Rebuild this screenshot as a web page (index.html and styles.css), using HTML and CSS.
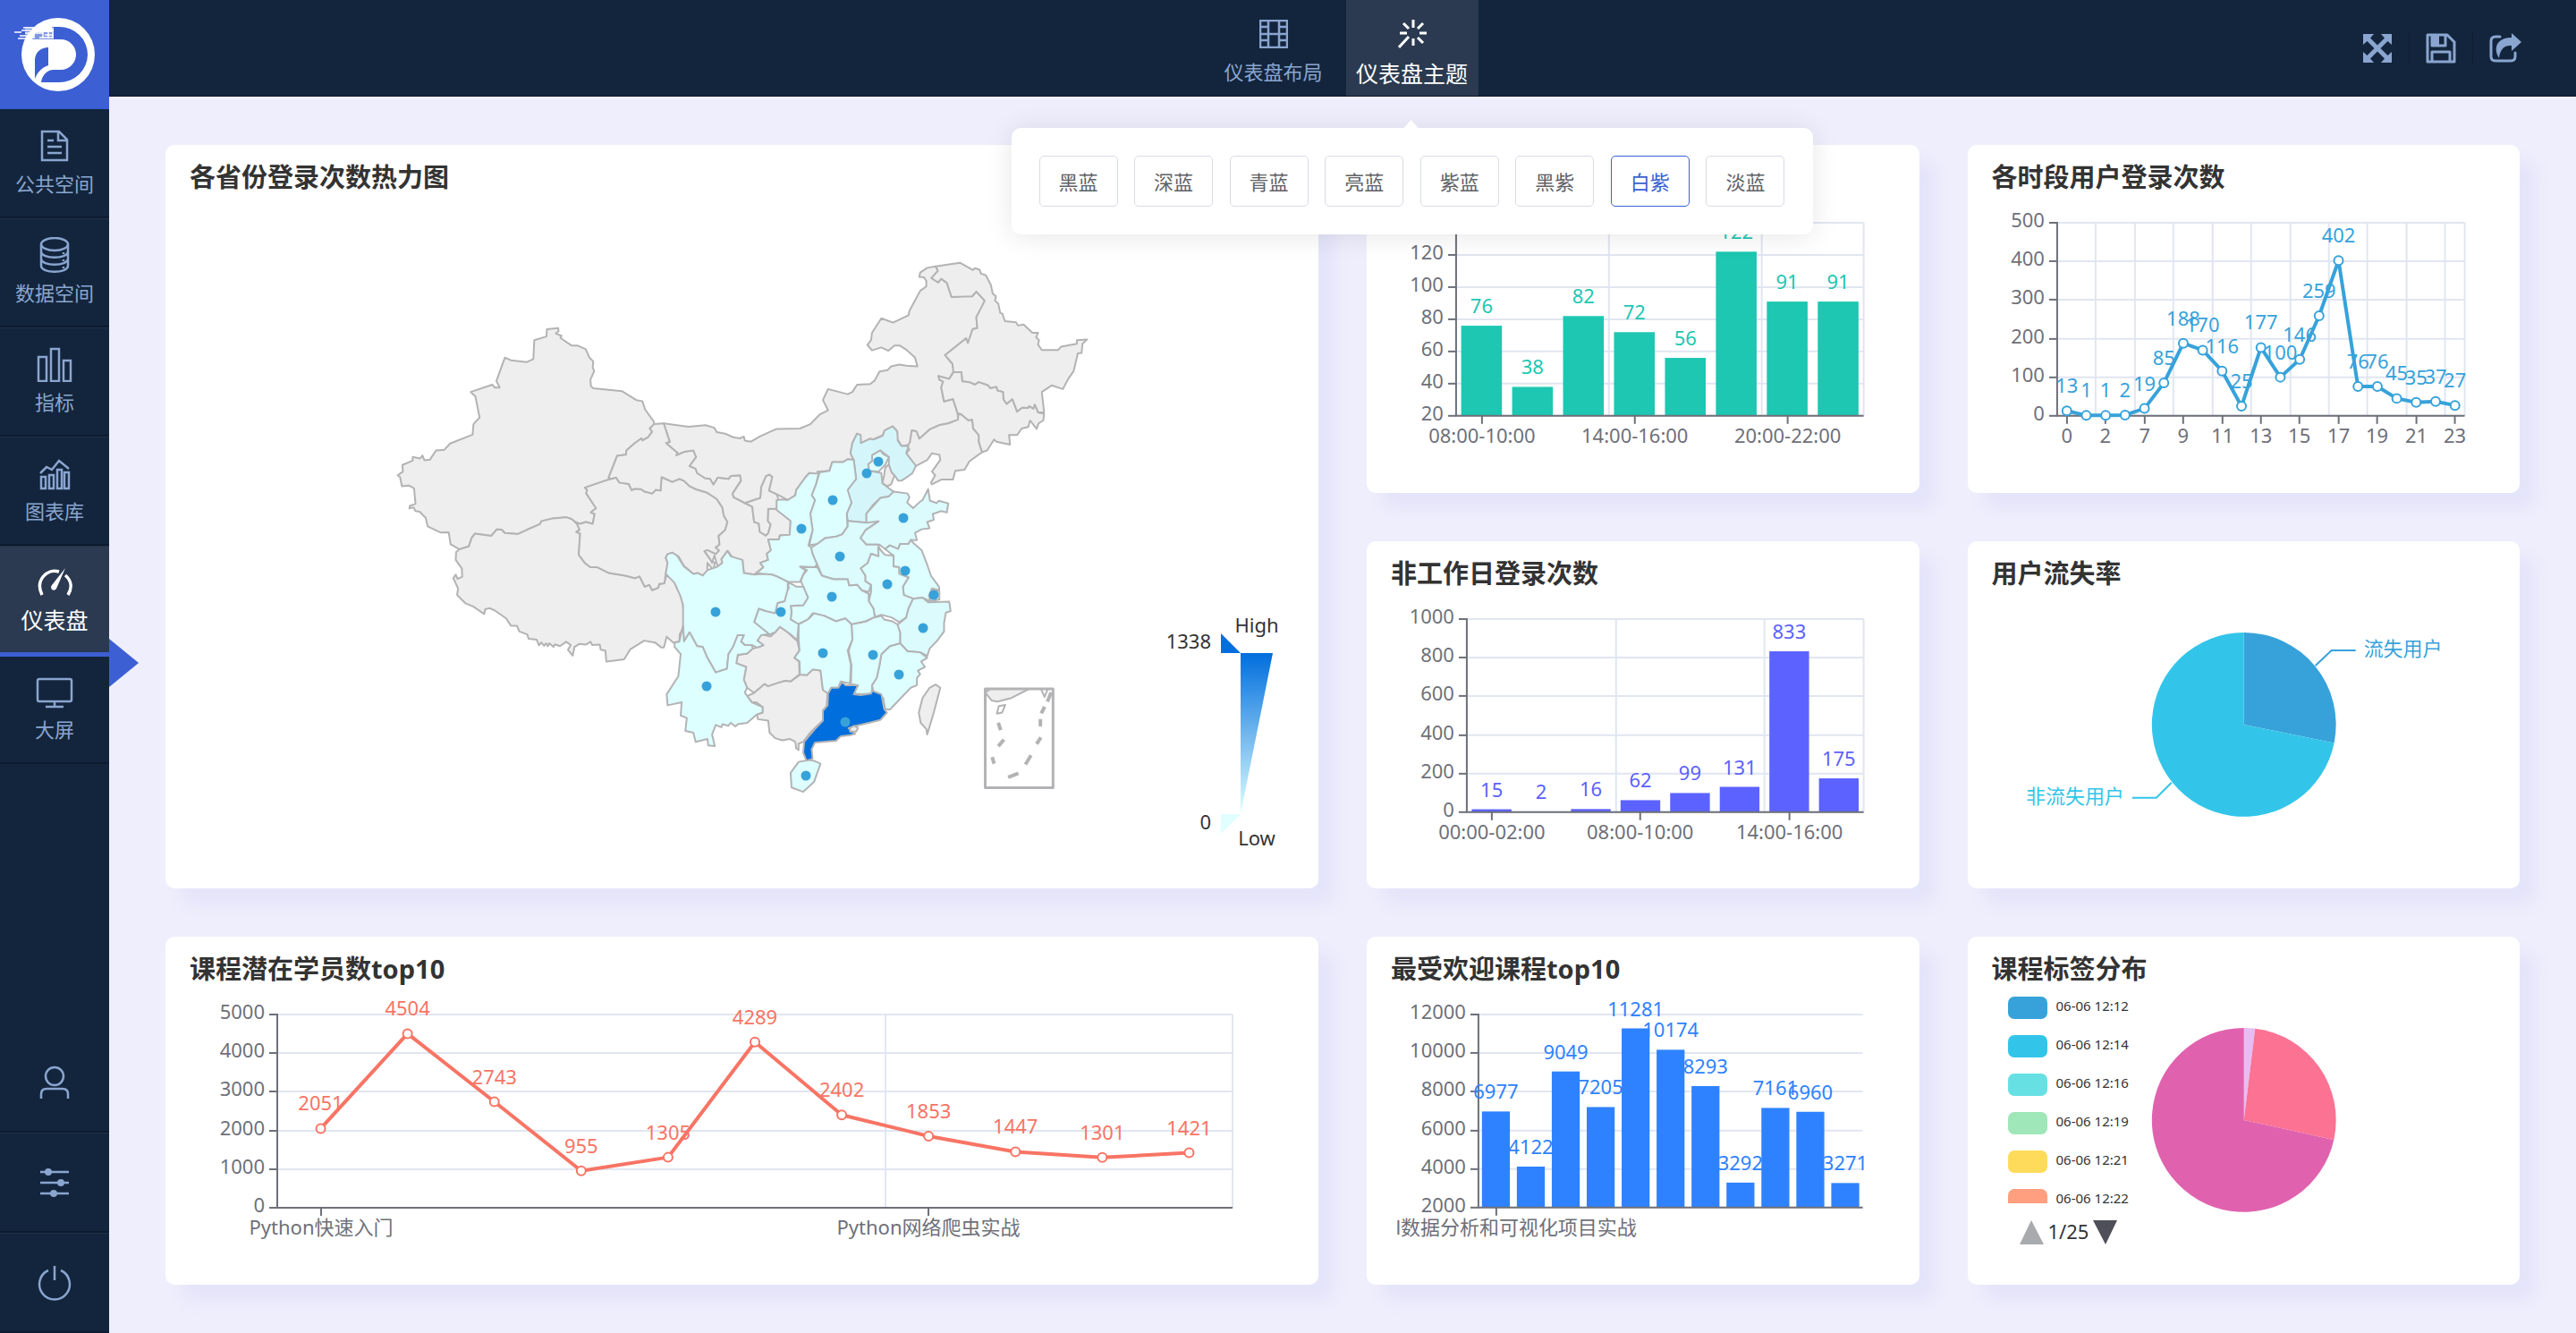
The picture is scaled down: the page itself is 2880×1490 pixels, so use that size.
FILE: index.html
```html
<!DOCTYPE html>
<html lang="zh-CN">
<head>
<meta charset="utf-8">
<title>仪表盘</title>
<link rel="stylesheet" href="styles.css">
</head>
<body>
<div class="app">
  <aside class="sidebar">
    <a class="logo" href="#" aria-label="首页">
      <svg viewBox="0 0 122 122">
        <circle cx="65" cy="61" r="41" fill="#fff"/>
        <path fill="#3c5fd3" d="M58 30H66A32 31 0 0 1 66 92H46C47 84 53 78 60 78H68A17 17 0 0 0 68 44H36L40 36H58Z"/>
        <path fill="#3c5fd3" d="M54 53V73C48 75 42 80 39 88V66C40 58 46 53 54 53Z"/>
        <path fill="#fff" d="M28 30h32v14h-32z" opacity=".35"/>
        <path stroke="#fff" stroke-width="1.5" fill="none" d="M16 36H24M26 31H38M24 34H34M28 37H40M20 43H32M22 40H36M38 30V43M36 33H46M40 37H48M48 30V43M46 34H60M50 39H60M44 42H60M54 30V43M59 31V43"/>
      </svg>
    </a>
    <nav class="menu">
      <a class="menu-item" href="#">
        <svg class="icon" viewBox="0 0 42 40"><path d="M7 4H26L35 13V36H7ZM25 4V14H35M13 14H20M13 21H29M13 28H29"/></svg>
        <span>公共空间</span>
      </a>
      <a class="menu-item" href="#">
        <svg class="icon" viewBox="0 0 42 40"><ellipse cx="21" cy="8" rx="15" ry="7"/><path d="M6 8V32C6 41 36 41 36 32V8M6 16C6 25 36 25 36 16M6 24C6 33 36 33 36 24"/><path d="M31 17v2M31 25v2M31 33v2"/></svg>
        <span>数据空间</span>
      </a>
      <a class="menu-item" href="#">
        <svg class="icon" viewBox="0 0 42 40"><path d="M3 12H12V39H3ZM17 3H26V39H17ZM31 16H39V39H31Z"/></svg>
        <span>指标</span>
      </a>
      <a class="menu-item" href="#">
        <svg class="icon" viewBox="0 0 42 40"><path d="M6 24H11V37H6ZM15 22H20V37H15ZM24 16H29V37H24ZM32 19H37V37H32ZM5 20L12 13 18 16 26 6 37 15"/></svg>
        <span>图表库</span>
      </a>
      <a class="menu-item is-active" href="#" aria-current="page">
        <svg class="icon" viewBox="0 0 42 40"><path class="thick" d="M7 34C-1 18 12 4 26 8M33 12C40 18 41 26 36 34"/><path class="solid" d="M33 4L23 27C20 31 15 27 18 23Z"/></svg>
        <span>仪表盘</span>
      </a>
      <a class="menu-item" href="#">
        <svg class="icon" viewBox="0 0 42 40"><rect x="2" y="6" width="38" height="25" rx="2"/><path d="M21 31V36M11 37H31"/></svg>
        <span>大屏</span>
      </a>
    </nav>
    <nav class="menu-bottom">
      <a class="menu-tool" href="#" aria-label="用户"><svg class="icon" viewBox="0 0 42 40"><circle cx="21" cy="13" r="10"/><path d="M6 38V33Q6 27 12 27H30Q36 27 36 33V38"/></svg></a>
      <a class="menu-tool" href="#" aria-label="设置"><svg class="icon" viewBox="0 0 42 40"><path d="M5 8H37M5 20H37M5 32H37"/><circle class="solid" cx="14" cy="8" r="4"/><circle class="solid" cx="28" cy="20" r="4"/><circle class="solid" cx="20" cy="32" r="4"/></svg></a>
      <a class="menu-tool" href="#" aria-label="退出"><svg class="icon" viewBox="0 0 42 40"><path d="M14 6A17 17 0 1 0 28 6M21 1V17"/></svg></a>
    </nav>
    <span class="sidebar-arrow"></span>
  </aside>

  <header class="topbar">
    <nav class="tabs">
      <button class="tab" type="button">
        <svg class="icon" viewBox="0 0 32 32"><path d="M1 1H31V31H1ZM10 1V31M22 1V31M10 16H22M1 8H10M1 16H10M1 23H10M22 8H31M22 16H31M22 23H31"/></svg>
        <span>仪表盘布局</span>
      </button>
      <div class="tab-wrap">
        <button class="tab is-active" type="button" aria-expanded="true">
          <svg class="icon" viewBox="0 0 32 32"><path d="M17 0V9M17 21V29M2 15H10M24 15H32M6 4L12 10M28 4L22 10M28 26L22 20M12 19L1 31"/></svg>
          <span>仪表盘主题</span>
        </button>
        <div class="themes">
          <button class="theme" type="button">黑蓝</button>
          <button class="theme" type="button">深蓝</button>
          <button class="theme" type="button">青蓝</button>
          <button class="theme" type="button">亮蓝</button>
          <button class="theme" type="button">紫蓝</button>
          <button class="theme" type="button">黑紫</button>
          <button class="theme is-selected" type="button" aria-pressed="true">白紫</button>
          <button class="theme" type="button">淡蓝</button>
        </div>
      </div>
    </nav>
    <div class="tools">
      <button class="tool" type="button" aria-label="全屏"><svg viewBox="0 0 36 36"><path fill="currentColor" d="M2 2H14L10 6.500 18 14.500 26 6.500 22 2H34V14L29.500 10 21.500 18 29.500 26 34 22V34H22L26 29.500 18 21.500 10 29.500 14 34H2V22L6.500 26 14.500 18 6.500 10 2 14Z"/></svg></button>
      <button class="tool" type="button" aria-label="保存"><svg viewBox="0 0 36 36"><path fill="none" stroke="currentColor" stroke-width="3" stroke-linejoin="round" d="M3 3H25L33 11V33H3ZM8 3V15H23V3M8 33V22H28V33"/><path fill="currentColor" d="M8 3H16V15H8Z"/></svg></button>
      <button class="tool" type="button" aria-label="分享"><svg viewBox="0 0 36 36"><path fill="none" stroke="currentColor" stroke-width="3" stroke-linecap="round" d="M12 5H7Q2 5 2 10V27Q2 32 7 32H24Q29 32 29 27V23"/><path fill="currentColor" d="M25 1L36 11 25 21V15C16 14 12 20 11 29C4 18 8 6 25 6Z"/></svg></button>
    </div>
  </header>

  <main class="board">
    <section class="card card-map">
      <h2>各省份登录次数热力图</h2>
      <svg class="chart" viewBox="0 0 1289 775" preserveAspectRatio="xMinYMin meet">
        <defs>
          <linearGradient id="heat" x1="0" y1="0" x2="0" y2="1"><stop offset="0" stop-color="#006edd"/><stop offset="1" stop-color="#e0ffff"/></linearGradient>
        </defs>
        <g class="map" transform="translate(245 52) scale(.52296 .40816)">
          <path d="M347,240 L371,237 372,245 366,252 378,258 376,264 400,285 413,285 430,295 438,318 446,328 445,345 448,355 440,378 441,396 446,402 508,410 538,434 551,437 557,460 575,492 576,500 567,512 572,521 563,536 551,545 549,539 535,552 517,572 516,584 497,587 487,620 479,646 484,650 471,655 428,674 433,680 431,690 438,703 452,730 441,742 449,746 445,773 430,768 418,773 408,768 400,760 388,755 360,758 335,766 332,774 305,789 285,801 257,798 250,789 240,788 228,806 193,800 186,812 180,835 160,843 141,829 137,796 120,797 92,780 88,757 75,740 66,738 62,728 53,731 54,724 66,718 63,676 52,668 37,670 33,645 28,640 39,630 38,612 60,600 60,590 76,594 81,586 85,599 97,597 110,572 128,570 140,553 188,529 190,500 203,482 194,424 184,412 230,392 236,400 246,400 239,382 257,318 270,325 304,330 318,322 320,270 346,260Z"/>
          <path d="M160,843 L180,835 186,812 193,800 228,806 240,788 250,789 257,798 285,801 305,789 332,774 335,766 360,758 388,755 400,760 412,774 417,790 410,795 418,800 415,858 428,880 440,892 455,892 480,908 515,915 535,922 545,917 556,945 566,940 572,955 585,948 587,938 598,936 602,915 618,925 625,950 635,970 638,995 641,1052 631,1075 630,1096 617,1098 603,1082 597,1112 592,1112 578,1098 555,1093 525,1117 512,1144 474,1150 472,1120 462,1118 460,1104 444,1105 440,1096 430,1104 416,1102 406,1110 402,1134 392,1118 398,1105 388,1096 375,1108 364,1103 361,1110 352,1100 349,1108 345,1100 341,1107 335,1098 330,1106 325,1090 308,1088 305,1076 288,1068 283,1052 270,1052 260,1032 235,1010 225,1004 215,1007 213,1020 190,1000 172,990 155,968 157,950 147,922 152,912 156,924 166,918 165,895 152,872 153,850Z"/>
          <path d="M428,674 L471,655 495,646 502,660 522,664 528,681 534,677 548,678 556,685 572,690 580,680 590,682 592,645 615,658 630,650 640,655 652,670 665,678 690,688 710,705 722,728 725,750 733,768 728,790 714,806 716,830 708,838 715,846 708,856 690,845 684,848 697,872 706,880 703,900 690,880 690,902 680,915 670,908 660,910 640,888 628,862 615,852 605,856 601,866 605,880 601,910 598,936 587,938 585,948 572,955 566,940 556,945 545,917 535,922 515,915 480,908 455,892 440,892 428,880 415,858 418,800 410,795 417,790 410,770 418,773 430,768 445,773 449,746 441,742 452,730 438,703 431,690 433,680Z"/>
          <path d="M576,500 L597,498 610,549 602,552 626,578 624,585 640,576 660,572 666,590 652,615 665,622 668,634 685,648 696,650 703,665 712,646 735,650 740,642 760,640 762,655 744,690 746,700 770,716 786,726 790,768 800,772 802,795 815,805 820,798 825,775 819,765 820,732 838,732 868,765 866,803 845,805 843,816 820,816 826,845 817,855 820,872 803,880 810,892 790,912 768,908 765,872 745,867 733,847 720,870 722,880 712,890 705,860 700,880 697,872 684,848 690,845 708,856 715,846 708,838 716,830 714,806 728,790 733,768 725,750 722,728 710,705 690,688 665,678 652,670 640,655 630,650 615,658 592,645 590,682 580,680 572,690 556,685 548,678 534,677 528,681 522,664 502,660 495,646 484,650 479,646 487,620 497,587 516,584 517,572 535,552 549,539 551,545 563,536 572,521 567,512Z"/>
          <path d="M770,716 L803,702 805,672 815,643 822,638 829,644 822,682 838,692 842,705 838,732 820,732 819,765 825,775 820,798 815,805 802,795 800,772 790,768 786,726Z"/>
          <path d="M597,498 L650,507 686,503 705,510 710,522 728,526 745,536 760,539 768,534 770,545 783,548 803,533 838,513 888,512 910,500 930,474 948,462 937,434 948,404 990,418 1000,412 1010,392 1038,390 1048,380 1058,356 1075,352 1083,342 1100,337 1115,340 1139,342 1134,318 1115,296 1102,285 1090,285 1077,299 1062,290 1042,298 1032,283 1040,270 1042,250 1062,210 1087,222 1120,202 1122,190 1145,135 1158,123 1158,108 1153,98 1143,97 1145,85 1160,72 1178,68 1183,80 1169,100 1182,103 1183,112 1190,102 1202,113 1212,152 1240,148 1256,150 1265,137 1283,162 1275,185 1265,207 1267,237 1257,240 1250,270 1247,278 1243,265 1198,311 1214,335 1225,330 1224,342 1214,340 1218,352 1207,376 1192,372 1184,368 1186,378 1194,383 1190,400 1196,438 1215,431 1225,470 1226,488 1205,498 1185,503 1165,515 1143,540 1137,520 1127,517 1123,557 1105,560 1096,540 1096,520 1086,506 1069,517 1065,530 1045,542 1038,540 1018,552 1017,530 1010,526 1000,552 996,580 1003,598 990,596 980,604 957,604 951,628 925,630 928,640 908,634 900,645 880,680 878,695 862,708 838,692 822,682 829,644 822,638 815,643 805,672 803,702 770,716 746,700 744,690 762,655 760,640 740,642 735,650 712,646 703,665 696,650 685,648 668,634 665,622 652,615 666,590 660,572 640,576 624,585 626,578 602,552 610,549Z"/>
          <path d="M1178,68 L1230,58 1258,78 1262,73 1272,77 1275,88 1285,92 1296,118 1300,142 1307,150 1305,162 1312,170 1316,195 1321,198 1326,218 1350,221 1354,230 1366,227 1385,250 1397,250 1393,262 1399,270 1397,282 1405,297 1440,297 1446,288 1480,280 1480,270 1502,268 1492,280 1490,305 1482,306 1473,355 1462,375 1450,404 1426,394 1405,412 1410,468 1397,468 1390,447 1387,458 1378,451 1376,456 1363,455 1352,466 1342,432 1330,445 1323,433 1322,412 1310,408 1308,398 1295,402 1290,394 1270,385 1262,392 1250,385 1235,383 1233,358 1216,358 1214,335 1198,311 1243,265 1247,278 1257,240 1267,237 1265,207 1283,162 1265,137 1256,150 1212,152 1202,113 1190,102 1183,112 1169,100 1183,80Z"/>
          <path d="M1216,358 L1233,358 1235,383 1250,385 1262,392 1270,385 1290,394 1295,402 1308,398 1310,408 1322,412 1323,433 1330,445 1342,432 1352,466 1363,455 1376,456 1378,451 1387,458 1390,447 1397,468 1410,472 1408,490 1398,498 1394,513 1380,490 1376,508 1362,512 1352,530 1335,530 1337,556 1308,548 1303,542 1288,572 1277,577 1270,548 1270,530 1258,512 1256,488 1248,490 1232,473 1225,470 1215,431 1196,438 1190,400 1194,383 1186,378 1184,368 1207,376Z"/>
          <path d="M1226,475 L1232,473 1248,490 1256,488 1258,512 1270,530 1270,548 1277,577 1250,602 1240,625 1220,628 1215,652 1190,652 1170,665 1168,660 1177,640 1170,630 1188,598 1186,584 1170,580 1160,598 1135,615 1115,580 1122,570 1117,560 1123,550 1127,517 1137,520 1143,540 1165,515 1185,503 1205,498 1226,488Z"/>
          <path d="M1070,620 L1078,610 1084,632 1090,640 1083,665 1074,670 1064,662 1068,640Z"/>
          <path d="M845,1055 L862,1070 878,1090 882,1092 887,1120 876,1140 886,1150 887,1185 868,1205 856,1203 838,1210 820,1218 812,1212 790,1236 775,1222 768,1200 773,1165 752,1155 755,1132 775,1128 787,1115 808,1107 797,1093 805,1075 825,1082 835,1070Z"/>
          <path d="M790,1236 L812,1212 820,1218 838,1210 856,1203 868,1205 888,1186 903,1187 915,1172 932,1175 937,1228 947,1235 945,1272 937,1285 937,1312 922,1330 910,1345 895,1370 885,1375 885,1393 880,1388 878,1370 866,1362 850,1366 835,1360 823,1345 820,1312 798,1308 796,1295 808,1290 808,1275 795,1262 785,1262 775,1245Z"/>
          <path d="M1178,1213 L1188,1222 1174,1290 1160,1350 1158,1335 1146,1318 1142,1290 1150,1250 1165,1222Z"/>
          <g class="lit">
            <path class="lit-mid" d="M1010,526 L1018,530 1018,552 1038,540 1045,542 1065,532 1069,517 1086,506 1096,520 1097,545 1105,560 1120,560 1115,580 1136,614 1128,635 1105,655 1098,655 1090,640 1084,632 1078,610 1078,590 1060,572 1042,585 1043,600 1034,610 1036,628 1062,634 1064,662 1088,685 1078,698 1060,702 1045,720 1030,745 1030,770 990,765 988,745 998,715 988,680 1008,650 1003,598 996,580 1000,552Z"/>
            <path d="M1060,572 L1066,582 1078,590 1070,612 1056,630 1036,628 1034,610 1043,600 1042,585Z"/>
            <path d="M1003,598 L1008,650 990,680 998,715 988,745 990,780 978,802 965,808 942,812 925,828 908,832 915,790 910,745 920,708 913,695 922,665 930,632 951,628 957,604 980,604 990,596Z"/>
            <path d="M928,636 L922,665 913,695 920,708 910,745 915,790 906,832 912,838 915,855 925,885 918,892 888,890 900,900 895,912 888,932 862,932 840,918 828,912 808,910 795,908 810,892 803,880 820,872 817,855 826,845 820,816 843,816 845,805 866,803 868,765 838,735 838,708 850,706 862,708 878,695 880,680 900,645 908,634Z"/>
            <path class="lit-low" d="M1088,685 L1118,690 1122,700 1117,715 1130,730 1145,712 1150,708 1162,678 1166,710 1180,716 1185,710 1205,717 1202,742 1190,738 1172,746 1174,762 1160,768 1165,785 1148,788 1134,798 1138,818 1125,817 1120,828 1102,828 1098,842 1080,832 1070,842 1058,830 1030,830 1017,812 1028,790 1056,766 1030,775 1030,745 1060,702 1078,698Z"/>
            <path class="lit-low" d="M990,765 L1030,770 1056,766 1028,790 1017,812 1030,830 1055,830 1060,845 1056,862 1040,855 1033,880 1018,895 1028,915 1028,930 1040,940 1035,960 1020,955 1010,940 993,942 990,925 960,925 935,915 925,885 915,855 912,838 925,828 942,812 965,808 978,802 990,780Z"/>
            <path d="M1125,817 L1130,825 1148,845 1160,885 1168,915 1185,945 1186,955 1170,950 1164,970 1166,985 1150,975 1130,978 1110,968 1108,945 1120,920 1100,910 1100,892 1088,890 1088,860 1070,842 1080,832 1098,842 1102,828 1120,828Z"/>
            <path d="M1055,838 L1070,858 1088,860 1088,890 1100,892 1100,910 1120,920 1108,945 1110,968 1130,978 1120,1005 1115,1030 1100,1042 1085,1030 1062,1022 1048,1028 1045,1005 1035,985 1040,960 1040,940 1028,930 1028,915 1018,895 1033,880 1040,855 1056,862Z"/>
            <path d="M1170,955 L1186,958 1186,980 1168,985 1164,970Z"/>
            <path class="lit-low" d="M1130,978 L1150,975 1162,988 1207,986 1210,1012 1200,1016 1196,1045 1196,1068 1182,1092 1165,1115 1160,1135 1145,1125 1118,1122 1102,1100 1102,1070 1096,1050 1115,1030 1120,1005Z"/>
            <path d="M1102,1100 L1118,1122 1145,1125 1160,1140 1147,1150 1155,1165 1140,1175 1145,1185 1138,1195 1138,1215 1125,1222 1100,1255 1080,1282 1070,1280 1066,1250 1045,1233 1042,1215 1052,1195 1058,1160 1062,1130 1080,1108Z"/>
            <path d="M998,1048 L1030,1040 1045,1030 1062,1025 1068,1035 1085,1040 1096,1048 1102,1070 1102,1100 1080,1108 1062,1130 1058,1160 1052,1195 1042,1215 1042,1238 1018,1240 1003,1238 1012,1215 997,1212 998,1160 992,1120 1000,1090Z"/>
            <path d="M925,892 L935,915 960,925 990,925 993,942 1010,940 1020,955 1035,965 1035,985 1045,1005 1048,1028 1028,1040 998,1048 985,1032 965,1040 940,1025 915,1018 905,1035 885,1048 868,1035 870,1012 868,998 895,996 905,975 895,945 890,930 895,912 903,900 890,892Z"/>
            <path d="M885,1048 L905,1035 918,1018 940,1025 965,1040 985,1032 998,1048 1000,1090 990,1120 997,1160 995,1210 975,1205 970,1222 955,1222 948,1238 937,1228 932,1175 915,1172 903,1187 888,1186 887,1150 876,1140 887,1120 885,1090Z"/>
            <path class="lit-low" d="M862,932 L880,945 895,945 905,975 895,996 868,998 870,1012 868,1035 885,1048 882,1092 870,1078 862,1070 845,1055 835,1070 820,1078 790,1042 800,1005 815,1012 835,1015 840,990 855,985 858,960 864,950Z"/>
            <path d="M601,910 L605,880 601,866 605,856 615,852 625,860 640,890 660,910 670,908 680,915 690,900 712,890 722,880 720,870 733,847 740,862 765,872 768,908 790,912 808,910 828,912 840,918 862,932 862,952 855,985 840,990 835,1018 815,1012 800,1005 790,1042 822,1075 805,1078 797,1093 810,1105 797,1112 785,1105 770,1105 762,1095 768,1078 755,1078 745,1110 735,1130 732,1170 708,1180 690,1140 680,1110 668,1108 652,1070 640,1095 638,1052 638,995 632,970 620,935Z"/>
            <path d="M638,1052 L640,1095 652,1070 668,1108 680,1110 690,1140 708,1180 732,1170 735,1130 745,1110 755,1078 768,1078 762,1095 770,1105 785,1105 787,1115 775,1128 755,1132 752,1155 773,1165 768,1200 775,1222 770,1235 785,1262 808,1275 808,1290 796,1295 775,1318 755,1322 750,1328 740,1318 735,1326 722,1322 720,1330 708,1324 700,1350 706,1382 692,1380 690,1362 665,1370 660,1345 643,1340 646,1305 633,1298 635,1262 605,1270 603,1240 628,1190 633,1130 620,1110 620,1098 630,1096Z"/>
            <path class="lit-high" d="M978,1206 L985,1215 1012,1215 1003,1240 1018,1242 1040,1238 1042,1230 1062,1240 1068,1280 1074,1290 1060,1310 1035,1318 1012,1325 992,1333 1006,1348 995,1352 975,1355 965,1367 920,1372 913,1390 915,1415 903,1425 895,1400 897,1370 920,1335 937,1312 937,1285 947,1270 948,1238 955,1222 970,1222Z"/>
            <path d="M908,1420 L918,1422 932,1430 918,1480 895,1507 870,1495 868,1455 885,1425Z"/>
          </g>
          <path d="M995,1332 L1004,1326 1012,1332 1008,1342 995,1342Z"/>
          <path d="M1284,1235 L1296,1225 1378,1225 1340,1250 1310,1260 1298,1257Z"/>
          <path class="frame" d="M1284,1225H1429V1496H1284Z"/>
          <path class="outline" d="M1313,1272 L1327,1269 1320,1290 1309,1293ZM1403,1225 L1411,1247 1418,1225"/>
          <path class="dash" d="M1425,1235 L1417,1260M1411,1274 L1404,1292M1402,1308V1328M1403,1358 L1394,1376M1382,1407 L1370,1432M1355,1456 L1333,1467M1299,1412 L1303,1430M1324,1364 L1312,1382M1312,1318 L1317,1338"/>
        </g>
        <g id="cities" fill="#37a2da"></g>
        <g class="map-legend">
          <path fill="url(#heat)" d="M1202 512H1238L1202 692Z"/>
          <path fill="#006edd" d="M1180 490V512H1202Z"/>
          <path fill="#e0ffff" d="M1180 692H1202L1180 714Z"/>
          <text x="1169" y="507" text-anchor="end">1338</text>
          <text x="1169" y="709" text-anchor="end">0</text>
          <text x="1220" y="489" text-anchor="middle">High</text>
          <text x="1220" y="727" text-anchor="middle">Low</text>
        </g>
      </svg>
    </section>
    <section class="card card-untitled">
      <svg class="chart" id="workday" viewBox="0 0 618 332" preserveAspectRatio="xMinYMin meet"></svg>
    </section>
    <section class="card">
      <h2>各时段用户登录次数</h2>
      <svg class="chart" id="hourly" viewBox="0 0 618 332" preserveAspectRatio="xMinYMin meet"></svg>
    </section>
    <section class="card">
      <h2>非工作日登录次数</h2>
      <svg class="chart" id="weekend" viewBox="0 0 618 332" preserveAspectRatio="xMinYMin meet"></svg>
    </section>
    <section class="card">
      <h2>用户流失率</h2>
      <svg class="chart" viewBox="0 0 618 332" preserveAspectRatio="xMinYMin meet">
        <g id="churn"></g>
        <path class="leader" stroke="#37a2da" d="M389 83L407 66H434"/>
        <path class="leader" stroke="#32c5e9" d="M228 214L211 231H184"/>
        <text x="443" y="72" fill="#37a2da">流失用户</text>
        <text x="175" y="237" fill="#32c5e9" text-anchor="end">非流失用户</text>
      </svg>
    </section>
    <section class="card card-wide">
      <h2>课程潜在学员数top10</h2>
      <svg class="chart" id="potential" viewBox="0 0 1289 332" preserveAspectRatio="xMinYMin meet"></svg>
    </section>
    <section class="card">
      <h2>最受欢迎课程top10</h2>
      <svg class="chart" id="popular" viewBox="0 0 618 332" preserveAspectRatio="xMinYMin meet"></svg>
    </section>
    <section class="card">
      <h2>课程标签分布</h2>
      <div class="tags">
        <svg class="chart" viewBox="0 0 618 332" preserveAspectRatio="xMinYMin meet"><g id="tagpie"></g></svg>
        <div class="legend">
          <ul>
            <li><i class="sw sw-1"></i>06-06 12:12</li>
            <li><i class="sw sw-2"></i>06-06 12:14</li>
            <li><i class="sw sw-3"></i>06-06 12:16</li>
            <li><i class="sw sw-4"></i>06-06 12:19</li>
            <li><i class="sw sw-5"></i>06-06 12:21</li>
            <li><i class="sw sw-6"></i>06-06 12:22</li>
          </ul>
          <div class="pager">
            <button type="button" aria-label="上一页" disabled><svg viewBox="0 0 27 27"><path fill="#a9aaae" d="M0 27L13 0 27 27Z"/></svg></button>
            <span>1/25</span>
            <button type="button" aria-label="下一页"><svg viewBox="0 0 27 27"><path fill="#4f4f5a" d="M0 0H27L14 27Z"/></svg></button>
          </div>
        </div>
      </div>
    </section>
  </main>
</div>
<script src="charts.js"></script>
</body>
</html>
```
FILE: styles.css
```css
* { box-sizing: border-box; }

body {
  margin: 0;
  background: #efeefc;
  color: #333;
  font-family: "Noto Sans", "Noto Sans CJK SC", sans-serif;
  font-size: 22px;
}

button { font: inherit; border: 0; background: none; padding: 0; cursor: pointer; }
a { text-decoration: none; color: inherit; }

.app {
  display: grid;
  grid-template-columns: 122px 1fr;
  grid-template-rows: 108px 1fr;
  min-height: 100vh;
}

/* sidebar */
.sidebar {
  grid-row: 1 / 3;
  position: relative;
  display: flex;
  flex-direction: column;
  background: #13253c;
  color: #8aa5cf;
}
.logo { height: 122px; background: #3c5fd3; }
.logo svg { display: block; width: 100%; }

.menu-item {
  position: relative;
  display: flex;
  flex-direction: column;
  align-items: center;
  gap: 6px;
  height: 122px;
  padding-top: 20px;
  line-height: 32px;
  border-top: 1px solid #203149;
  border-bottom: 2px solid #0d1b2e;
}
.menu-item:first-child { border-top-color: #13253c; }
.icon {
  width: 42px;
  height: 40px;
  fill: none;
  stroke: currentColor;
  stroke-width: 2.500;
}
.icon .solid { fill: currentColor; stroke: none; }
.icon .thick { stroke-width: 3.500; }
.menu-item.is-active { background: #2b3a50; color: #fff; font-size: 25px; }
.menu-item.is-active::after {
  content: "";
  position: absolute;
  z-index: 1;
  inset: auto 0 -4px;
  height: 5px;
  background: #3c5fd3;
}
.menu-bottom { margin-top: auto; }
.menu-tool {
  display: flex;
  align-items: center;
  justify-content: center;
  height: 112px;
  border-top: 1px solid #203149;
  border-bottom: 2px solid #0d1b2e;
}
.menu-tool:first-child { border-top-color: #13253c; }
.sidebar-arrow {
  position: absolute;
  top: 714px;
  left: 100%;
  z-index: 1;
  width: 33px;
  height: 54px;
  background: #3c5fd3;
  clip-path: polygon(0 0, 100% 50%, 0 100%);
}

/* top bar */
.topbar {
  display: grid;
  grid-template-columns: 1fr auto 1fr;
  background: #13253c;
  border-bottom: 1px solid #0c1729;
  color: #8aa5cf;
}
.tabs { grid-column: 2; display: flex; gap: 7px; }
.tab-wrap { position: relative; display: flex; }
.tab {
  display: flex;
  flex-direction: column;
  align-items: center;
  gap: 8px;
  width: 148px;
  padding-top: 22px;
  color: inherit;
  line-height: 36px;
  white-space: nowrap;
}
.tab .icon { width: 32px; height: 32px; }
.tab.is-active { background: #2b3a50; color: #fff; font-size: 25px; line-height: 40px; }
.tab.is-active .icon { stroke-width: 3; }

.themes {
  position: absolute;
  top: 143px;
  left: 50%;
  z-index: 2;
  display: flex;
  justify-content: space-between;
  width: 896px;
  padding: 31px;
  background: #fff;
  border-radius: 10px;
  box-shadow: 0 2px 30px rgba(0, 0, 0, .1);
  transform: translateX(-50%);
}
.themes::before {
  content: "";
  position: absolute;
  top: -9px;
  left: 50%;
  width: 18px;
  height: 10px;
  margin-left: -10px;
  background: #fff;
  clip-path: polygon(50% 0, 100% 100%, 0 100%);
}
.theme {
  width: 88px;
  height: 57px;
  padding-bottom: 2px;
  border: 1px solid #d9dbe5;
  border-radius: 5px;
  background: #fff;
  color: #606266;
}
.theme.is-selected { border-color: #3c5fd3; color: #3c5fd3; }

.tools { grid-column: 3; display: flex; justify-content: flex-end; align-items: center; padding-right: 44px; }
.tool {
  display: flex;
  justify-content: center;
  width: 71px;
  color: #8aa5cf;
  border-right: 1px dotted #0c1729;
}
.tool:last-child { border-right: 0; }
.tool svg { width: 36px; height: 36px; }

/* board */
.board {
  display: grid;
  grid-template-columns: repeat(4, minmax(0, 1fr));
  grid-template-rows: repeat(3, minmax(0, 1fr));
  gap: 54px;
  padding: 54px 63px;
}
.card {
  display: flex;
  flex-direction: column;
  min-width: 0;
  background: #fff;
  border-radius: 10px;
  box-shadow: 18px 18px 18px #e4e4fa;
}
.card-map { grid-column: span 2; grid-row: span 2; }
.card-wide { grid-column: span 2; }
.card-untitled { padding-top: 56px; }
.card h2 {
  margin: 0;
  padding: 16px 27px 0;
  font-size: 29px;
  line-height: 40px;
}
.chart { display: block; width: 100%; flex: 1; min-height: 0; }
.chart text { font-size: 22px; }

.map path { fill: #eee; stroke: #b3b3b5; stroke-width: 2; stroke-linejoin: round; vector-effect: non-scaling-stroke; }
.map .lit path { fill: #dff; }
.map .lit .lit-low { fill: #dbfbfd; }
.map .lit .lit-mid { fill: #d4f6fb; }
.map .lit .lit-high { fill: #006edd; }
.map .outline { fill: none; }
.map .frame { fill: none; stroke-width: 3; }
.map .dash { fill: none; stroke-width: 4; }
.map-legend text { fill: #333; }

.axis { stroke: #6e7079; stroke-width: 2; fill: none; }
.grid { stroke: #e0e6f1; stroke-width: 2; fill: none; }
.axis-label { fill: #6e7079; }
.series { fill: none; stroke-width: 4; stroke-linejoin: bevel; }
.dot { fill: #fff; stroke-width: 2; }
.leader { fill: none; stroke-width: 2; }

.tags { flex: 1; min-height: 0; display: grid; }
.tags > * { grid-area: 1 / 1; }
.tags .chart { height: 100%; }
.legend { position: relative; justify-self: start; padding: 11px 0 0 45px; }
.legend ul { display: flex; flex-direction: column; gap: 18px; margin: 0; padding: 0; list-style: none; }
.legend li { display: flex; gap: 10px; height: 25px; font-size: 15px; line-height: 21px; }
.sw { width: 44px; height: 25px; border-radius: 7px; }
.sw-1 { background: #37a2da; }
.sw-2 { background: #32c5e9; }
.sw-3 { background: #67e0e3; }
.sw-4 { background: #9fe6b8; }
.sw-5 { background: #ffdb5c; }
.sw-6 { height: 16px; border-radius: 7px 7px 0 0; background: #ff9f7f; }
.pager { display: flex; gap: 5px; padding: 10px 0 0 13px; line-height: 24px; }
.pager svg { display: block; width: 27px; height: 27px; }
```
FILE: charts.js
```js
const NS = 'http://www.w3.org/2000/svg';
const TOP = 31;
const BOTTOM = 247;

function add(parent, name, attrs, text) {
  const node = document.createElementNS(NS, name);
  for (const key in attrs) node.setAttribute(key, attrs[key]);
  if (text !== undefined) node.textContent = text;
  parent.appendChild(node);
  return node;
}

function cartesian(id, o) {
  const svg = document.getElementById(id);
  const step = (o.right - o.left) / o.values.length;
  const y = v => BOTTOM - (v - o.min) / (o.max - o.min) * (BOTTOM - TOP);
  const cx = i => o.left + step * (i + 0.5);

  for (let v = o.min; v <= o.max; v += o.tick) {
    const py = Math.round(y(v));
    add(svg, 'path', { class: 'grid', d: `M${o.left} ${py}H${o.right}` });
    add(svg, 'path', { class: 'axis', d: `M${o.left - 9} ${py}H${o.left}` });
    add(svg, 'text', { class: 'axis-label', x: o.left - 14, y: py + 5, 'text-anchor': 'end' }, v);
  }
  o.splits.forEach(i => {
    const px = Math.round(o.left + step * i);
    add(svg, 'path', { class: 'grid', d: `M${px} ${TOP}V${BOTTOM}` });
  });

  if (o.type === 'bar') {
    o.values.forEach((v, i) => add(svg, 'rect', {
      x: cx(i) - step * 0.4, y: y(v), width: step * 0.8, height: BOTTOM - y(v), fill: o.color
    }));
  }
  add(svg, 'path', { class: 'axis', d: `M${o.left} ${TOP - 1}V${BOTTOM}H${o.right}` });
  Object.entries(o.labels).forEach(([i, label]) => {
    const px = Math.round(cx(+i));
    add(svg, 'path', { class: 'axis', d: `M${px} ${BOTTOM}v9` });
    const end = o.labelEnd;
    add(svg, 'text', { class: 'axis-label', x: end || px, y: BOTTOM + 30, 'text-anchor': end ? 'end' : 'middle' }, label);
  });
  if (o.type === 'line') {
    add(svg, 'polyline', { class: 'series', stroke: o.color, points: o.values.map((v, i) => `${cx(i)},${y(v)}`).join(' ') });
    o.values.forEach((v, i) => add(svg, 'circle', { class: 'dot', cx: cx(i), cy: y(v), r: 5, stroke: o.color }));
  }
  const lift = o.type === 'line' ? 20 : 14;
  o.values.forEach((v, i) => add(svg, 'text', { x: cx(i), y: y(v) - lift, fill: o.color, 'text-anchor': 'middle' }, v));
}

function pie(id, cx, cy, r, slices) {
  const g = document.getElementById(id);
  let from = 0;
  const at = deg => {
    const a = deg * Math.PI / 180;
    return `${cx + r * Math.sin(a)} ${cy - r * Math.cos(a)}`;
  };
  slices.forEach(([to, color]) => {
    add(g, 'path', { fill: color, d: `M${cx} ${cy}L${at(from)}A${r} ${r} 0 ${to - from > 180 ? 1 : 0} 1 ${at(to)}Z` });
    from = to;
  });
}

cartesian('workday', {
  type: 'bar', color: '#1dc7b2', left: 100, right: 556, min: 20, max: 140, tick: 20,
  values: [76, 38, 82, 72, 56, 122, 91, 91], splits: [3, 6, 8],
  labels: { 0: '08:00-10:00', 3: '14:00-16:00', 6: '20:00-22:00' }
});
cartesian('hourly', {
  type: 'line', color: '#37a2da', left: 100, right: 556, min: 0, max: 500, tick: 100,
  values: [13, 1, 1, 2, 19, 85, 188, 170, 116, 25, 177, 100, 146, 259, 402, 76, 76, 45, 35, 37, 27],
  splits: [2, 4, 6, 8, 10, 12, 14, 16, 18, 20, 21],
  labels: { 0: 0, 2: 2, 4: 7, 6: 9, 8: 11, 10: 13, 12: 15, 14: 17, 16: 19, 18: 21, 20: 23 }
});
cartesian('weekend', {
  type: 'bar', color: '#5c62ff', left: 112, right: 556, min: 0, max: 1000, tick: 200,
  values: [15, 2, 16, 62, 99, 131, 833, 175], splits: [3, 6, 8],
  labels: { 0: '00:00-02:00', 3: '08:00-10:00', 6: '14:00-16:00' }
});
cartesian('potential', {
  type: 'line', color: '#f87464', left: 125, right: 1193, min: 0, max: 5000, tick: 1000,
  values: [2051, 4504, 2743, 955, 1305, 4289, 2402, 1853, 1447, 1301, 1421], splits: [7, 11],
  labels: { 0: 'Python快速入门', 7: 'Python网络爬虫实战' }
});
cartesian('popular', {
  type: 'bar', color: '#2e82ff', left: 125, right: 555, min: 2000, max: 12000, tick: 2000,
  values: [6977, 4122, 9049, 7205, 11281, 10174, 8293, 3292, 7161, 6960, 3271], splits: [],
  labels: { 0: 'l数据分析和可视化项目实战' }, labelEnd: 302
});
pie('churn', 309, 149, 103, [[101.5, '#37a2da'], [360, '#32c5e9']]);
pie('tagpie', 309, 149, 103, [[7, '#e7bcf3'], [102.5, '#fb7293'], [360, '#e062ae']]);

const cities = document.getElementById('cities');
[[797, 298], [784, 311], [746, 341], [711, 373], [825, 361], [754, 404], [827, 420], [807, 435], [859, 447],
 [745, 449], [615, 466], [688, 466], [847, 484], [735, 512], [791, 514], [820, 536], [605, 549], [760, 589], [716, 649]]
  .forEach(([x, y]) => add(cities, 'circle', { cx: x, cy: y, r: 5.5 }));
```
